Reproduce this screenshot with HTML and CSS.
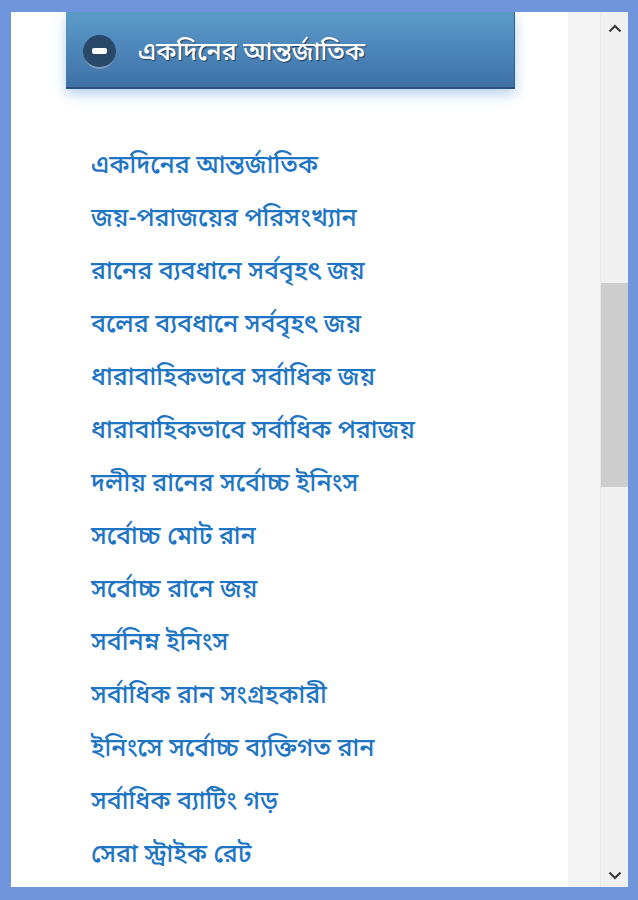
FILE: index.html
```html
<!DOCTYPE html>
<html lang="bn">
<head>
	<meta charset="UTF-8">
	<title>একদিনের আন্তর্জাতিক</title>
	<link rel="stylesheet" href="styles.css">
</head>
<body>
<div class="window">
	<div class="content">
		<div class="panel-head">
			<span class="toggle"><i></i></span>
			<span class="panel-title">একদিনের আন্তর্জাতিক</span>
		</div><!-- header -->
		<ul class="links">
			<li><a href="#">একদিনের আন্তর্জাতিক</a></li>
			<li><a href="#">জয়-পরাজয়ের পরিসংখ্যান</a></li>
			<li><a href="#">রানের ব্যবধানে সর্ববৃহৎ জয়</a></li>
			<li><a href="#">বলের ব্যবধানে সর্ববৃহৎ জয়</a></li>
			<li><a href="#">ধারাবাহিকভাবে সর্বাধিক জয়</a></li>
			<li><a href="#">ধারাবাহিকভাবে সর্বাধিক পরাজয়</a></li>
			<li><a href="#">দলীয় রানের সর্বোচ্চ ইনিংস</a></li>
			<li><a href="#">সর্বোচ্চ মোট রান</a></li>
			<li><a href="#">সর্বোচ্চ রানে জয়</a></li>
			<li><a href="#">সর্বনিম্ন ইনিংস</a></li>
			<li><a href="#">সর্বাধিক রান সংগ্রহকারী</a></li>
			<li><a href="#">ইনিংসে সর্বোচ্চ ব্যক্তিগত রান</a></li>
			<li><a href="#">সর্বাধিক ব্যাটিং গড়</a></li>
			<li><a href="#">সেরা স্ট্রাইক রেট</a></li>
		</ul>
	</div>
	<div class="gutter"></div>
	<div class="scrollbar">
		<span class="arrow">
			<svg width="14" height="9" viewBox="0 0 14 9"><path d="M1.5 7.5 L7 2 L12.5 7.5" fill="none" stroke="#3a3a3a" stroke-width="2.2"/></svg>
		</span>
		<div class="track"><div class="thumb"></div></div>
		<span class="arrow arrow-down">
			<svg width="14" height="9" viewBox="0 0 14 9"><path d="M1.5 1.5 L7 7 L12.5 1.5" fill="none" stroke="#3a3a3a" stroke-width="2.2"/></svg>
		</span>
	</div>
</div>
</body>
</html>
```
FILE: styles.css
```css
* {
	box-sizing: border-box;
}
body {
	margin: 0;
	height: 900px;
	background-color: #6f96dc;
	font-family: "Noto Sans Bengali", "Vrinda", "Noto Sans", sans-serif;
	overflow: hidden;
}
.window {
	display: flex;
	height: 875px;
	margin: 12px 10px 0 11px;
	background: #fff;
	overflow: hidden;
}
.content {
	flex: 0 0 557px;
	overflow: hidden;
}
.panel-head {
	display: flex;
	align-items: center;
	width: 449px;
	height: 77px;
	margin-left: 55px;
	padding: 4px 0 0 17px;
	background-image: linear-gradient(180deg, #5c9bc8 0%, #4d86ba 50%, #3f72a7 100%);
	border-bottom: 2px solid #2d4f78;
	border-right: 1px solid #34608f;
	box-shadow: 0 5px 12px rgba(90,150,220,.45);
}
.toggle {
	display: flex;
	align-items: center;
	justify-content: center;
	width: 33px;
	height: 34px;
	border-radius: 50%;
	background: #2a4868;
	border-bottom: 2px solid #7d9bb8;
}
.toggle i {
	display: block;
	width: 15px;
	height: 6px;
	border-radius: 2px;
	background: #fff;
}
.panel-title {
	margin: 4px 0 0 22px;
	font-size: 25px;
	font-weight: 500;
	color: #fff;
	text-shadow: 1px 1px 1px #1c3a5c;
}
.links {
	list-style: none;
	margin: 51px 0 0;
	padding: 0 0 0 80px;
}
.links li {
	height: 53px;
	line-height: 53px;
	font-size: 25px;
	font-weight: 500;
}
.links a {
	color: #1d75c4;
	text-decoration: none;
}
.gutter {
	flex: 0 0 32px;
	background: #f3f3f3;
}
.scrollbar {
	flex: 0 0 28px;
	display: flex;
	flex-direction: column;
	background: #f0f0f0;
	border-left: 1px solid #e8e8e8;
}
.arrow {
	display: flex;
	align-items: center;
	justify-content: center;
	height: 32px;
}
.arrow-down {
	padding-top: 8px;
}
.track {
	flex: 1;
	padding-top: 239px;
}
.thumb {
	width: 27px;
	height: 204px;
	background: #cdcdcd;
}
```
